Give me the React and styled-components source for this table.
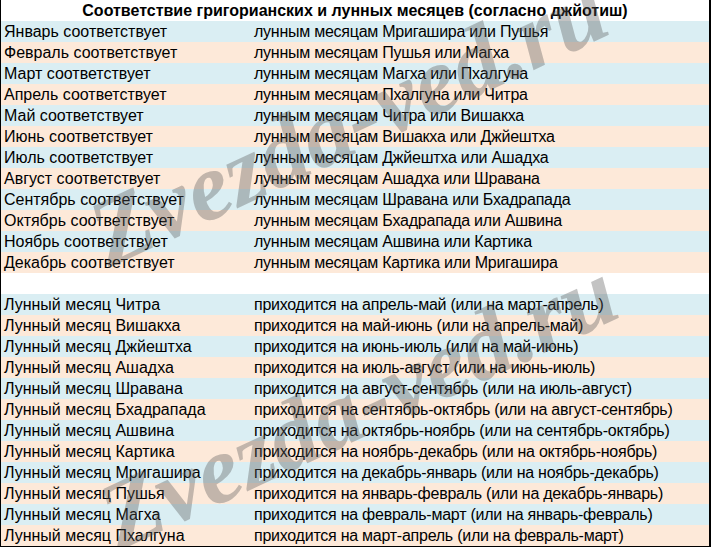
import React from "react";
import styled, { createGlobalStyle } from "styled-components";

const Global = createGlobalStyle`
  html, body { margin: 0; padding: 0; background: #fff; }
  body { font-family: "Liberation Sans", Arial, sans-serif; }
`;

const Sheet = styled.div`
  position: relative;
  width: 711px;
  height: 547px;
  box-sizing: border-box;
  border-left: 1px solid #000;
  border-right: 2px solid #000;
  border-bottom: 1px solid #000;
  overflow: hidden;
  display: flex;
  flex-direction: column;
  color: #000;
  font-size: 16px;
`;

const Header = styled.div`
  height: 21px;
  box-sizing: border-box;
  padding-top: 1px;
  line-height: 20px;
  text-align: center;
  font-weight: bold;
  background: #fff;
  white-space: nowrap;
`;

const Row = styled.div`
  height: 21px;
  flex: none;
  display: grid;
  grid-template-columns: 250px 1fr;
  background: ${(p) =>
    p.$tone === "blue" ? "#daeef3" : p.$tone === "peach" ? "#fde9d9" : "#fff"};
`;

const Cell = styled.div`
  box-sizing: border-box;
  height: 21px;
  padding-top: 1px;
  line-height: 20px;
  white-space: nowrap;
  padding-left: 3px;
  letter-spacing: ${(p) => (p.$tight ? "-0.25px" : "0")};
`;

const Watermark = styled.div`
  position: absolute;
  left: ${(p) => p.$x}px;
  top: ${(p) => p.$y}px;
  font-family: "Liberation Serif", "Times New Roman", serif;
  font-style: italic;
  font-weight: bold;
  font-size: 96px;
  line-height: 1;
  white-space: nowrap;
  color: rgba(90, 90, 90, 0.36);
  transform-origin: 0 80px;
  transform: rotate(-25deg);
  pointer-events: none;
`;

const top = [
  ["Январь соответствует", "лунным месяцам Мригашира или Пушья"],
  ["Февраль соответствует", "лунным месяцам Пушья или Магха"],
  ["Март соответствует", "лунным месяцам Магха или Пхалгуна"],
  ["Апрель соответствует", "лунным месяцам Пхалгуна или Читра"],
  ["Май соответствует", "лунным месяцам Читра или Вишакха"],
  ["Июнь соответствует", "лунным месяцам Вишакха или Джйештха"],
  ["Июль соответствует", "лунным месяцам Джйештха или Ашадха"],
  ["Август соответствует", "лунным месяцам Ашадха или Шравана"],
  ["Сентябрь соответствует", "лунным месяцам Шравана или Бхадрапада"],
  ["Октябрь соответствует", "лунным месяцам Бхадрапада или Ашвина"],
  ["Ноябрь соответствует", "лунным месяцам Ашвина или Картика"],
  ["Декабрь соответствует", "лунным месяцам Картика или Мригашира"],
];

const bottom = [
  ["Лунный месяц Читра", "приходится на апрель-май (или на март-апрель)"],
  ["Лунный месяц Вишакха", "приходится на май-июнь (или на апрель-май)"],
  ["Лунный месяц Джйештха", "приходится на июнь-июль (или на май-июнь)"],
  ["Лунный месяц Ашадха", "приходится на июль-август (или на июнь-июль)"],
  ["Лунный месяц Шравана", "приходится на август-сентябрь (или на июль-август)"],
  ["Лунный месяц Бхадрапада", "приходится на сентябрь-октябрь (или на август-сентябрь)"],
  ["Лунный месяц Ашвина", "приходится на октябрь-ноябрь (или на сентябрь-октябрь)"],
  ["Лунный месяц Картика", "приходится на ноябрь-декабрь (или на октябрь-ноябрь)"],
  ["Лунный месяц Мригашира", "приходится на декабрь-январь (или на ноябрь-декабрь)"],
  ["Лунный месяц Пушья", "приходится на январь-февраль (или на декабрь-январь)"],
  ["Лунный месяц Магха", "приходится на февраль-март (или на январь-февраль)"],
  ["Лунный месяц Пхалгуна", "приходится на март-апрель (или на февраль-март)"],
];

const renderRows = (rows, key) =>
  rows.map(([a, b], i) => (
    <Row key={key + i} $tone={i % 2 === 0 ? "blue" : "peach"}>
      <Cell>{a}</Cell>
      <Cell $tight>{b}</Cell>
    </Row>
  ));

export default function App() {
  return (
    <>
      <Global />
      <Sheet>
        <Header>Соответствие григорианских и лунных месяцев (согласно джйотиш)</Header>
        {renderRows(top, "t")}
        <Row $tone="white" />
        {renderRows(bottom, "b")}
        <Watermark $x={108} $y={188}>Zvezda-ved.ru</Watermark>
        <Watermark $x={118} $y={471}>Zvezda-ved.ru</Watermark>
      </Sheet>
    </>
  );
}
